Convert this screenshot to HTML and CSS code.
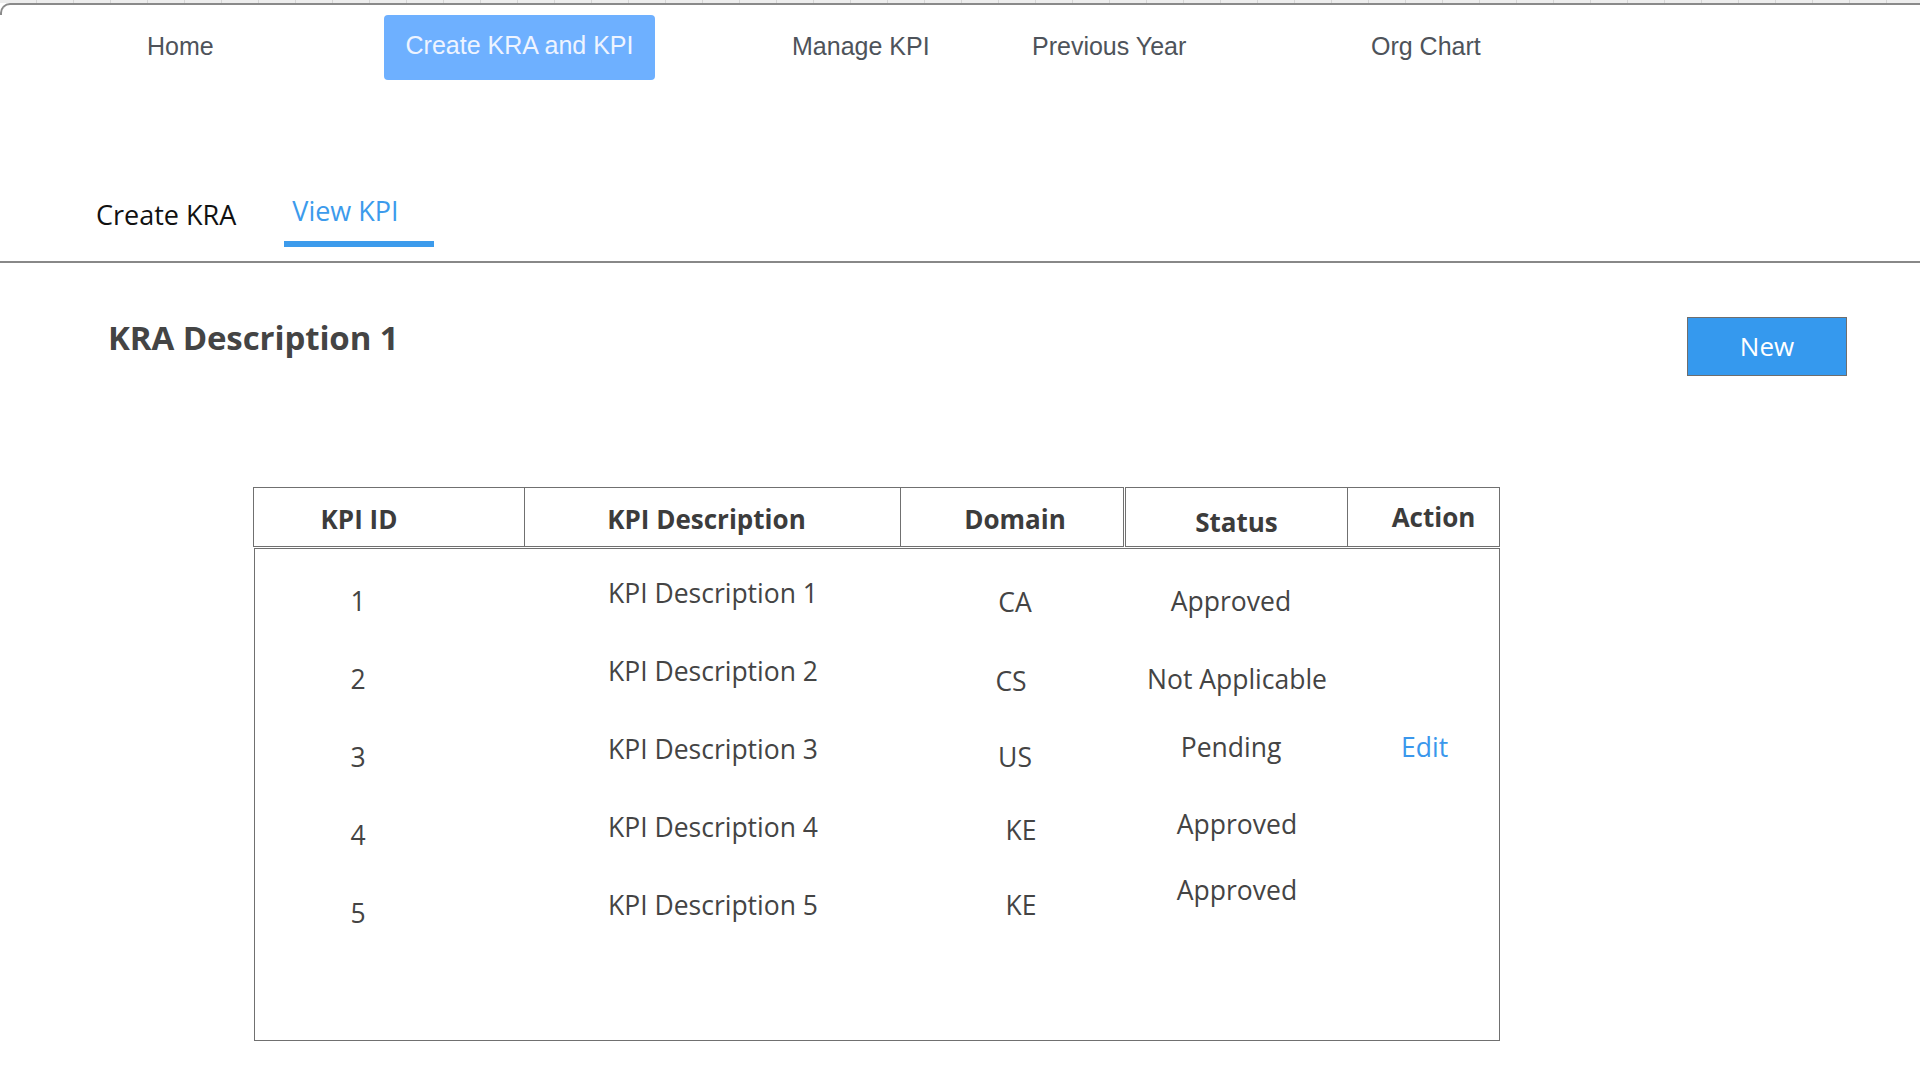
FILE: index.html
```html
<!DOCTYPE html>
<html lang="en">
<head>
<meta charset="utf-8">
<title>View KPI</title>
<link rel="stylesheet" href="styles.css">
</head>
<body>
<div class="ruler"></div>
<div class="frame-edge"></div>
<nav class="topnav">
  <a class="nav-item">Home</a>
  <a class="nav-item nav-active">Create KRA and KPI</a>
  <a class="nav-item">Manage KPI</a>
  <a class="nav-item">Previous Year</a>
  <a class="nav-item">Org Chart</a>
</nav>
<div class="tabs">
  <div class="tab">Create KRA</div>
  <div class="tab tab-active">View KPI</div>
</div>
<div class="title-row">
  <h1 class="title">KRA Description 1</h1>
  <button class="btn-new">New</button>
</div>
<div class="table">
  <div class="thead">
    <div class="th th-id">KPI ID</div>
    <div class="th th-desc">KPI Description</div>
    <div class="th th-domain">Domain</div>
    <div class="th th-status">Status</div>
    <div class="th th-action">Action</div>
  </div>
  <div class="tbody">
    <div class="td">1</div>
    <div class="td td-desc">KPI Description 1</div>
    <div class="td td-domain down-1">CA</div>
    <div class="td">Approved</div>
    <div class="td td-action"></div>

    <div class="td">2</div>
    <div class="td td-desc">KPI Description 2</div>
    <div class="td td-domain down-2 shift-l">CS</div>
    <div class="td shift-r">Not Applicable</div>
    <div class="td td-action"></div>

    <div class="td">3</div>
    <div class="td td-desc">KPI Description 3</div>
    <div class="td td-domain">US</div>
    <div class="td up-10">Pending</div>
    <div class="td td-action up-10"><a class="edit">Edit</a></div>

    <div class="td">4</div>
    <div class="td td-desc">KPI Description 4</div>
    <div class="td td-domain up-5 shift-r">KE</div>
    <div class="td up-11 shift-r">Approved</div>
    <div class="td td-action"></div>

    <div class="td">5</div>
    <div class="td td-desc">KPI Description 5</div>
    <div class="td td-domain up-8 shift-r">KE</div>
    <div class="td up-23 shift-r">Approved</div>
    <div class="td td-action"></div>
  </div>
</div>
</body>
</html>
```
FILE: styles.css
```css
* { box-sizing: border-box; }

html, body {
  margin: 0;
  padding: 0;
  background: #ffffff;
}

body {
  width: 1920px;
  height: 1080px;
  overflow: hidden;
  font-family: "Open Sans", "Noto Sans", sans-serif;
  color: #444444;
}

.ruler {
  height: 3px;
  background-color: #ededed;
  background-image: repeating-linear-gradient(90deg, transparent 0, transparent 36px, #d6d6d6 36px, #d6d6d6 37px);
}

.frame-edge {
  height: 12px;
  border-top: 2px solid #8a8a8a;
  border-left: 2px solid #8a8a8a;
  border-top-left-radius: 10px;
}

/* top navigation */
.topnav {
  display: grid;
  grid-template-columns: 237px 408px 240px 339px auto;
  align-items: start;
  padding-left: 147px;
  height: 65px;
  font-family: "Liberation Sans", Arial, sans-serif;
  font-size: 25px;
  line-height: 28px;
}

.nav-item {
  display: block;
  color: #4e535a;
  padding-top: 17px;
  white-space: nowrap;
}

.nav-active {
  width: 271px;
  height: 65px;
  padding-top: 16px;
  text-align: center;
  background: #6eb0ff;
  color: #eef4ff;
  border-radius: 4px;
}

/* sub tabs */
.tabs {
  display: flex;
  align-items: flex-end;
  margin-top: 113px;
  padding-left: 96px;
  padding-bottom: 14px;
  border-bottom: 2px solid #888888;
  font-size: 27px;
  line-height: 36px;
}

.tab {
  color: #111111;
  padding-bottom: 14px;
  white-space: nowrap;
}

.tab-active {
  margin-left: 48px;
  padding: 0 35px 12px 8px;
  color: #3c9bec;
  border-bottom: 6px solid #3c9bec;
}

/* title row */
.title-row {
  display: flex;
  justify-content: space-between;
  align-items: flex-start;
  margin-top: 54px;
  padding: 0 73px 0 108px;
}

.title {
  margin: 0;
  font-size: 33px;
  line-height: 42px;
  font-weight: 700;
  color: #444444;
  letter-spacing: -0.1px;
}

.btn-new {
  width: 160px;
  height: 59px;
  padding: 0;
  background: #3599ee;
  border: 1px solid #6e6e6e;
  color: #ffffff;
  font-family: "Open Sans", "Noto Sans", sans-serif;
  font-size: 26px;
  line-height: 57px;
}

/* table */
.table {
  margin-top: 111px;
  margin-left: 253px;
  width: 1247px;
}

.thead {
  display: flex;
  height: 60px;
}

.th {
  display: flex;
  align-items: center;
  justify-content: center;
  height: 60px;
  padding-top: 3px;
  border-top: 1px solid #707070;
  border-bottom: 1px solid #707070;
  border-right: 1px solid #707070;
  font-size: 26px;
  font-weight: 700;
  color: #3c3c3c;
  white-space: nowrap;
}

.th-id {
  width: 272px;
  border-left: 1px solid #707070;
  padding-right: 60px;
}

.th-desc { width: 376px; padding-right: 12px; }

.th-domain { width: 223px; padding-left: 6px; }

.th-status {
  width: 223px;
  margin-left: 1px;
  border-left: 1px solid #707070;
  padding-top: 10px;
}

.th-action {
  width: 152px;
  padding-left: 20px;
  padding-top: 0;
}

.tbody {
  display: grid;
  grid-template-columns: 206px 504px 100px 332px 1fr;
  grid-auto-rows: 78px;
  align-items: start;
  margin-top: 1px;
  margin-left: 1px;
  width: 1246px;
  height: 493px;
  padding-top: 34px;
  border: 1px solid #707070;
  font-size: 26.5px;
  line-height: 36px;
  color: #444444;
}

.td {
  text-align: center;
  white-space: nowrap;
}

.td-desc { margin-top: -8px; }

.td-action {
  text-align: left;
  padding-left: 4px;
}

.edit {
  color: #3a97ec;
}

.down-1 { margin-top: 1px; }
.down-2 { margin-top: 2px; }
.up-5 { margin-top: -5px; }
.up-8 { margin-top: -8px; }
.up-10 { margin-top: -10px; }
.up-11 { margin-top: -11px; }
.up-23 { margin-top: -23px; }

.shift-r { padding-left: 12px; }
.shift-l { padding-right: 8px; }
```
